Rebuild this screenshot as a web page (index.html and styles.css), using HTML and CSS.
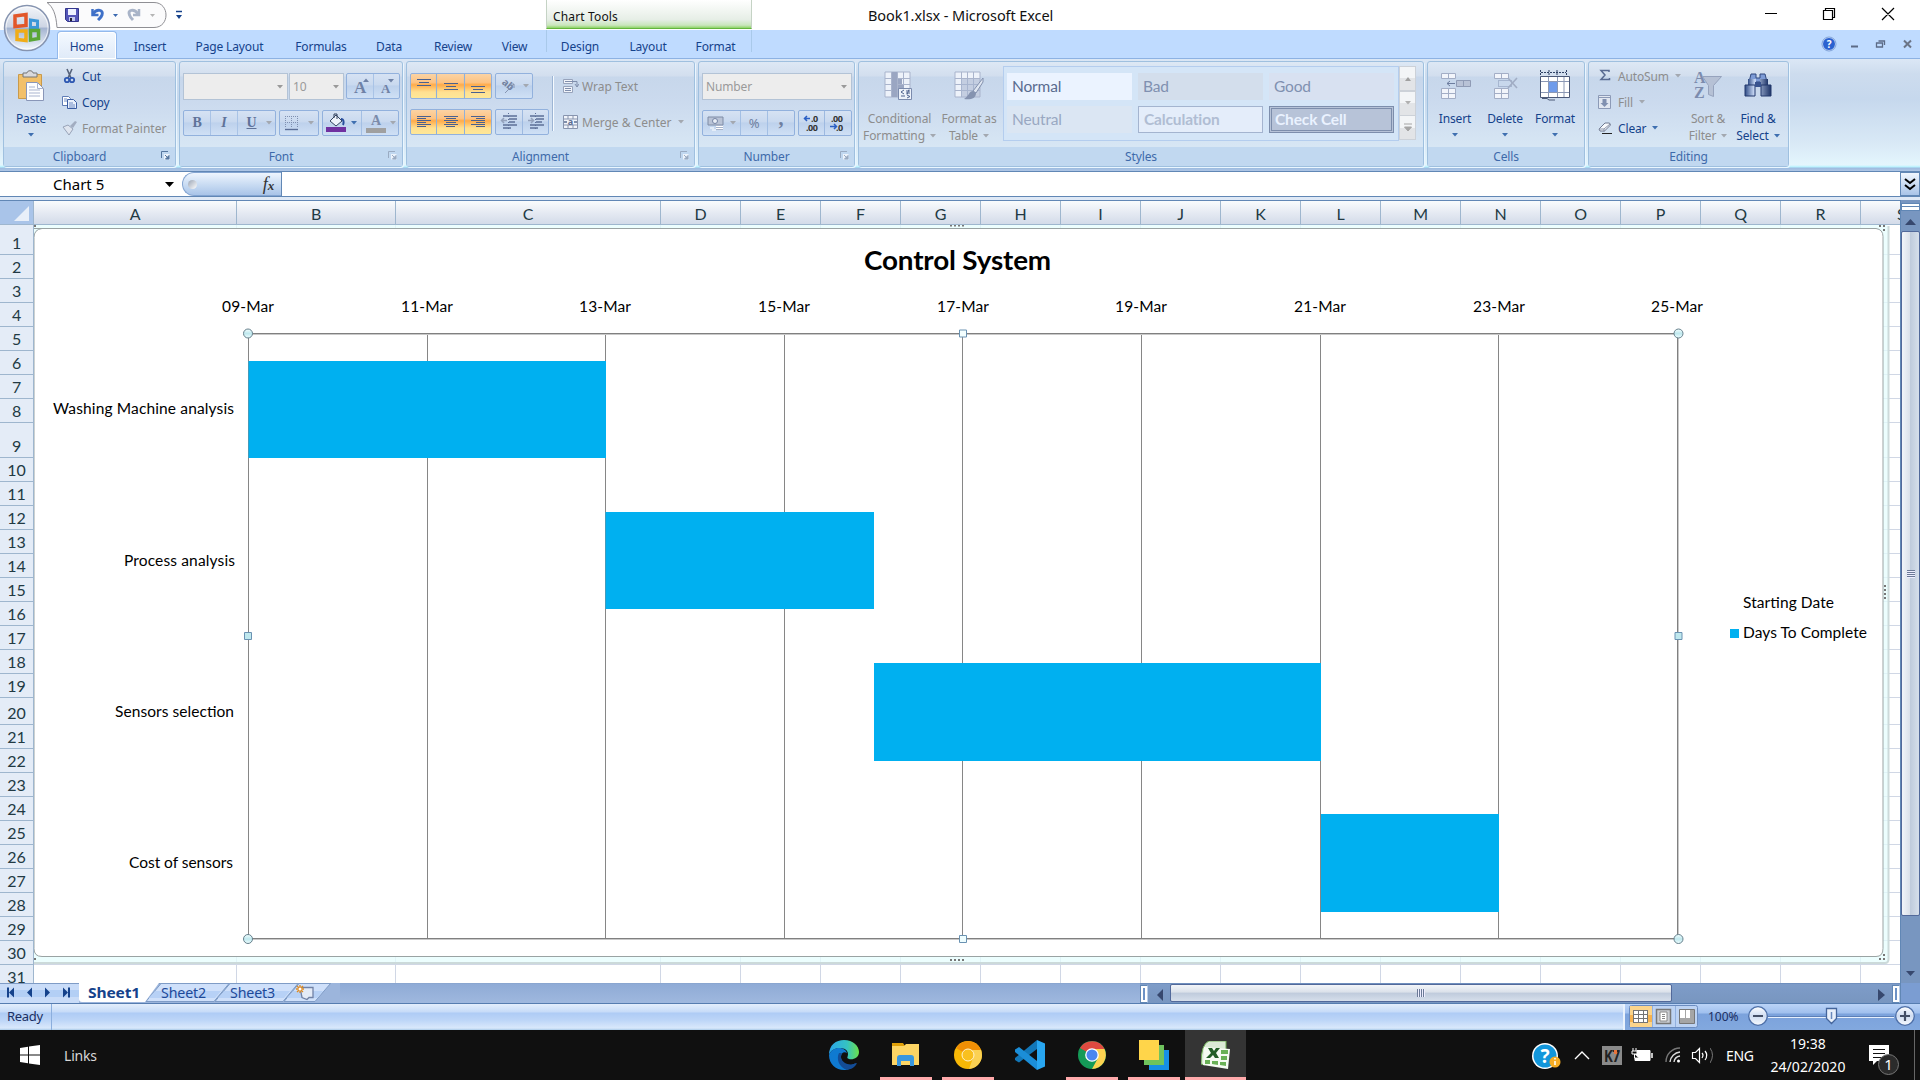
FILE: index.html
```html
<!DOCTYPE html>
<html lang="en">
<head>
<meta charset="utf-8">
<title>Book1.xlsx - Microsoft Excel</title>
<link rel="stylesheet" href="styles.css">
</head>
<body>
<svg width="0" height="0" class="defs">
  <defs>
    <linearGradient id="gOrb" x1="0" y1="0" x2="0" y2="1"><stop offset="0" stop-color="#f4f6fa"/><stop offset=".48" stop-color="#cdd5e4"/><stop offset=".5" stop-color="#a3b3d0"/><stop offset="1" stop-color="#f5faff"/></linearGradient>
    <linearGradient id="gHandle" x1="0" y1="0" x2="0" y2="1"><stop offset="0" stop-color="#f4ffff"/><stop offset=".5" stop-color="#bfe8ee"/><stop offset="1" stop-color="#effeff"/></linearGradient>
    <linearGradient id="gBino" x1="0" y1="0" x2="1" y2="0"><stop offset="0" stop-color="#2f4c86"/><stop offset=".35" stop-color="#c9d9f5"/><stop offset="1" stop-color="#1e3467"/></linearGradient>
    <linearGradient id="gEdge" x1="0" y1="0" x2="1" y2="0"><stop offset="0" stop-color="#2aa5ea"/><stop offset=".6" stop-color="#35c2c2"/><stop offset="1" stop-color="#6be04a"/></linearGradient>
    <linearGradient id="gRound" x1="0" y1="0" x2="0" y2="1"><stop offset="0" stop-color="#fff"/><stop offset=".5" stop-color="#cfdcf1"/><stop offset="1" stop-color="#f6faff"/></linearGradient>
    <symbol id="dd" viewBox="0 0 6 4"><path d="M0 0h6L3 3.5z" fill="currentColor"/></symbol>
    <symbol id="launch" viewBox="0 0 9 9"><path d="M.5 7V.5H7" fill="none" stroke="currentColor"/><path d="M3 3h5.5v5.5H3z" fill="#fff" opacity=".7"/><path d="M4 4l4 4M8 4.500V8H4.500z" stroke="currentColor" fill="currentColor"/></symbol>
    <symbol id="gridIcon" viewBox="0 0 31 30"><path d="M1 1h25v25H1z" fill="#edf2fa"/><path d="M1 1h25v25H1zM7.500 1v25M13.500 1v25M19.500 1v25M1 7.500h25M1 13.500h25M1 19.500h25" fill="none" stroke="#a9b4cc"/></symbol>
  </defs>
</svg>

<header class="titlebar">
  <svg class="orb" width="52" height="52" viewBox="0 0 52 52">
    <circle cx="27" cy="28" r="22.500" fill="url(#gOrb)" stroke="#8694b0" stroke-width="1.500"/>
    <circle cx="27" cy="28" r="21" fill="none" stroke="#fff" opacity=".7"/>
    <path d="M15 16l11-1.500v11l-11 1z" fill="none" stroke="#e2572a" stroke-width="3.500"/>
    <path d="M30.500 20l7 1v6.500h-7z" fill="none" stroke="#3c97d8" stroke-width="3"/>
    <path d="M17 31h9v9.500l-9-1z" fill="none" stroke="#f0ac17" stroke-width="3.500"/>
    <path d="M30.500 30.500h8v8l-8 1.500z" fill="none" stroke="#5aa636" stroke-width="3.500"/>
  </svg>
  <svg class="qat" width="140" height="30" viewBox="47 0 140 30">
    <path d="M47 2.500H154C170 2.500 170 27.500 154 27.500H57C56 14 53 7 47 2.500z" fill="#fbfbfc" stroke="#8f8f94"/>
    <path d="M65.500 8.500h13v13h-11l-2-2z" fill="#5456b8" stroke="#33368c"/><path d="M68 9h8v6h-8z" fill="#eef2ff"/><path d="M69 17h6v4h-6z" fill="#c3c9ee"/><path d="M70 18h2v3h-2z" fill="#223"/>
    <path d="M92.500 9v6h6" fill="none" stroke="#3f70c8" stroke-width="2.500"/><path d="M93 14C97 8 104 10 102 15C101 18 99 19 98 20" fill="none" stroke="#3f70c8" stroke-width="3"/>
    <path d="M113 14h5l-2.500 3z" fill="#3a68b0"/>
    <path d="M139 9v6h-6" fill="none" stroke="#a9b4c8" stroke-width="2.500"/><path d="M138 14C134 8 127 10 129.500 15C130 17 132 19 133 20" fill="none" stroke="#a9b4c8" stroke-width="3"/>
    <path d="M150 14h5l-2.500 3z" fill="#b5b5b5"/>
    <path d="M176 11.500h6" stroke="#15428b" stroke-width="1.500"/><path d="M176 15h6l-3 4z" fill="#15428b"/>
  </svg>
  <div class="context">Chart Tools</div>
  <div class="doctitle">Book1.xlsx - Microsoft Excel</div>
  <svg class="winbtns" width="160" height="30" viewBox="1760 0 160 30" fill="none" stroke="#000" stroke-width="1.200"><path d="M1765 13.500h12M1823.500 10.500h9v9h-9zM1825.500 10.500v-2h9v9h-2M1882 8l12 12M1894 8l-12 12"/></svg>
</header>

<nav class="tabs">
  <span class="tab active">Home</span><span class="tab t2">Insert</span><span class="tab t3">Page Layout</span><span class="tab t4">Formulas</span><span class="tab t5">Data</span><span class="tab t6">Review</span><span class="tab t7">View</span>
  <span class="ctxtabs"><span class="tab c1">Design</span><span class="tab c2">Layout</span><span class="tab c3">Format</span></span>
  <svg class="docbtns" width="100" height="28" viewBox="1820 30 100 28"><circle cx="1829" cy="44" r="6.500" fill="#2b62d0" stroke="#dce8fb"/><circle cx="1829" cy="44" r="7" fill="none" stroke="#5d86c9" stroke-width=".7"/><text x="1829" y="48" text-anchor="middle" class="qm">?</text><path d="M1851 46.500h7" stroke="#5c6b86" stroke-width="2"/><path d="M1876.500 43h6v4h-6zM1878.500 41h6v4" fill="none" stroke="#5c6b86" stroke-width="1.300"/><path d="M1904 40.500l7 7M1911 40.500l-7 7" stroke="#6b7486" stroke-width="2"/></svg>
</nav>

<section class="ribbon">
  <div class="group g-clip">
    <div class="gbody">
      <div class="big paste">
        <svg width="28" height="32" viewBox="0 0 28 32"><path d="M1.500 4.500h23v24h-23z" fill="#f2c069" stroke="#c99a4b"/><path d="M6 3h4c0-3 6-3 6 0h4v4H6z" fill="#d9d9dc" stroke="#777"/><path d="M9.500 12.500h11l6 6v12h-17z" fill="#fdfeff" stroke="#8996b8"/><path d="M20.500 12.500v6h6M12 17h6M12 20h11M12 23h11M12 26h11" fill="none" stroke="#a9b4cf"/></svg>
        <span class="lbl">Paste</span><svg class="dd" width="6" height="4"><use href="#dd"/></svg>
      </div>
      <div class="stack">
        <div class="item"><svg width="16" height="16" viewBox="0 0 16 16"><path d="M5 1l4 9M10 1L6 10" stroke="#56627a" stroke-width="1.600"/><circle cx="5" cy="12" r="2.200" fill="none" stroke="#2e58b2" stroke-width="1.800"/><circle cx="10" cy="12" r="2.200" fill="none" stroke="#2e58b2" stroke-width="1.800"/></svg><span>Cut</span></div>
        <div class="item"><svg width="16" height="16" viewBox="0 0 16 16"><path d="M.5 2.500h6l2 2v7h-8z" fill="#fff" stroke="#5f7cb5"/><path d="M5.500 5.500h6l3 3v6h-9z" fill="#e9f0fc" stroke="#3a5da3"/><path d="M2 5h3M2 7h3M7 9h4M7 11h6M7 13h6" stroke="#6f8cc5"/></svg><span>Copy</span></div>
        <div class="item dis"><svg width="16" height="16" viewBox="0 0 16 16"><path d="M1 7l5-2 5 4-4 6z" fill="#dfe5ef" stroke="#98a3b8"/><path d="M8 6l5-5 2 1-4 6z" fill="#a2adc1"/></svg><span class="fp">Format Painter</span></div>
      </div>
    </div>
    <div class="glabel la">Clipboard<svg class="launch" width="9" height="9"><use href="#launch"/></svg></div>
  </div>

  <div class="group g-font">
    <div class="gbody col">
      <div class="row r1"><div class="combo fontname"><i></i><svg width="6" height="4"><use href="#dd"/></svg></div><div class="combo fontsize"><i>10</i><svg width="6" height="4"><use href="#dd"/></svg></div>
        <div class="btns w53"><svg width="51" height="24" viewBox="0 0 51 24"><text x="6" y="19" class="bigA">A</text><path d="M15 8h6l-3-3.500z" fill="#6f82a6"/><path d="M25.500 0v24" stroke="#a9c3e6"/><text x="33" y="19" class="smallA">A</text><path d="M40 5h6l-3 3.500z" fill="#6f82a6"/></svg></div></div>
      <div class="row r2"><div class="btns w93"><b class="btn serif">B</b><b class="btn serif it">I</b><b class="btn serif un">U</b><svg class="dd g" width="6" height="4"><use href="#dd"/></svg></div>
        <div class="btns w40"><svg width="16" height="16" viewBox="0 0 16 16"><path d="M1.500 1v12M7.500 1v12M13.500 1v12M1 1.500h13M1 7.500h13" stroke="#7f90b0" stroke-dasharray="1 1"/><path d="M1 14.500h13" stroke="#5b6f98" stroke-width="1.400"/></svg><svg class="dd g" width="6" height="4"><use href="#dd"/></svg></div>
        <div class="btns w78"><svg width="22" height="20" viewBox="0 0 22 20"><path d="M5 8l6-6 6 6-6 5z" fill="#eef3fb" stroke="#33435f"/><path d="M9 5V1h3v5" fill="none" stroke="#33435f"/><path d="M16 6c3 0 3 4 2 6" stroke="#284e9d" stroke-width="2" fill="none"/><path d="M1 14h20v5H1z" fill="#7030a0"/></svg><svg class="dd" width="6" height="4"><use href="#dd"/></svg><span class="vsep"></span><b class="fontcolor">A</b><svg class="dd g" width="6" height="4"><use href="#dd"/></svg></div></div>
    </div>
    <div class="glabel la">Font<svg class="launch g" width="9" height="9"><use href="#launch"/></svg></div>
  </div>

  <div class="group g-align">
    <div class="gbody">
      <div class="acol">
        <div class="row"><div class="btns hot"><svg width="81" height="24" viewBox="0 0 81 24" stroke="#4a6190" stroke-width="1.100"><path d="M6 5.500h14M8 8.500h10M6 11.500h14M33 9.500h14M35 12.500h10M33 15.500h14M60 12.500h14M62 15.500h10M60 18.500h14"/><path d="M25.500 0v24M53.500 0v24" stroke="#8fb0da"/></svg></div>
        <div class="btns w37"><svg width="18" height="18" viewBox="0 0 18 18"><text x="2" y="9" transform="rotate(40 6 8)" class="ab">ab</text><path d="M6 16L15 7M11 7h4v4" fill="none" stroke="#8695b1"/></svg><svg class="dd g" width="6" height="4"><use href="#dd"/></svg></div></div>
        <div class="row"><div class="btns hot"><svg width="81" height="24" viewBox="0 0 81 24" stroke="#4a6190"><path d="M6 6.500h14M6 8.500h9M6 10.500h14M6 12.500h9M6 14.500h14M6 16.500h9M33 6.500h14M35 8.500h10M33 10.500h14M35 12.500h10M33 14.500h14M35 16.500h9M60 6.500h14M65 8.500h9M60 10.500h14M65 12.500h9M60 14.500h14M65 16.500h9"/><path d="M25.500 0v24M53.500 0v24" stroke="#8fb0da"/></svg></div>
        <div class="btns w53"><svg width="52" height="24" viewBox="0 0 52 24" fill="none" stroke="#5d7098" stroke-width="1.500"><path d="M7 6h14M13 9h8M13 12h6M7 15h14M7 18h8M34 6h14M40 9h8M40 12h6M34 15h14M34 18h8"/><path d="M12.500 3v17M39.500 3v17" stroke-dasharray="1 2" stroke-width="1"/><path d="M11 10.500H6M8 8l-2.500 2.500L8 13M32 10.500h5M35 8l2.500 2.500L35 13" stroke="#93a1bb"/><path d="M26.500 0v24" stroke="#9db9e0" stroke-width="1"/></svg></div></div>
      </div>
      <div class="rule"></div>
      <div class="wcol dis">
        <div class="item"><svg width="17" height="16" viewBox="0 0 17 16"><path d="M1.500 1.500h9v4h-9zM1.500 8.500h9v6h-9z" fill="#f1f4fa" stroke="#97a3bb"/><path d="M3 3.500h12v5M13 6l2 3 2-3M3 10.500h6M3 12.500h6" fill="none" stroke="#7f8eac"/></svg><span class="wt">Wrap Text</span></div>
        <div class="item"><svg width="17" height="16" viewBox="0 0 17 16"><path d="M1.500 1.500h14v13h-14zM1 5h15M1 11h15M6 1v4M11 1v4M6 11v4M11 11v4" fill="#f1f4fa" stroke="#8794ae"/><path d="M2 8h3M12 8h3" stroke="#5b6d93" stroke-width="1.500"/><text x="5.800" y="10.800" class="ma">a</text></svg><span class="mc">Merge &amp; Center</span><svg class="dd g" width="6" height="4"><use href="#dd"/></svg></div>
      </div>
    </div>
    <div class="glabel la">Alignment<svg class="launch g" width="9" height="9"><use href="#launch"/></svg></div>
  </div>

  <div class="group g-num">
    <div class="gbody col">
      <div class="row r1"><div class="combo numfmt"><i>Number</i><svg width="6" height="4"><use href="#dd"/></svg></div></div>
      <div class="row r2"><div class="btns w93 pct"><svg class="money" width="18" height="17" viewBox="0 0 18 17"><path d="M1 2h15v8H1z" fill="#b9c3d6" stroke="#7f8ca6"/><circle cx="8" cy="6" r="2.500" fill="#e9eef6" stroke="#7585a5"/><path d="M9 10h7v5H9z" fill="#a7b3ca"/><path d="M9 11.500h7M9 13.500h7M3 13h4M5 15h4" stroke="#fff"/></svg><svg class="dd g" width="6" height="4"><use href="#dd"/></svg><span class="vsep"></span><b class="pc">%</b><span class="vsep"></span><b class="pc serif">,</b></div>
      <div class="btns w53"><svg width="52" height="24" viewBox="0 0 52 24"><text x="12" y="11" class="dec">.0</text><text x="7" y="20" class="dec">.00</text><path d="M11 7.500H5M8 5L5.500 7.500 8 10M31 15.500h6M35 13l2.500 2.500L35 18" fill="none" stroke="#2b5fc4" stroke-width="1.500"/><text x="32" y="11" class="dec">.00</text><text x="37" y="20" class="dec">.0</text><path d="M25.500 0v24" stroke="#9db9e0"/></svg></div></div>
    </div>
    <div class="glabel la">Number<svg class="launch g" width="9" height="9"><use href="#launch"/></svg></div>
  </div>

  <div class="group g-styles">
    <div class="gbody">
      <div class="big dis cf"><svg width="31" height="32" viewBox="0 0 31 30"><use href="#gridIcon" width="31" height="30"/><path d="M8 1h5v25H8zM14 8h4v5h-4zM14 14h6v5h-6z" fill="#9aa6c2"/><path d="M14.500 17.500h13v11h-13z" fill="#edf2fa" stroke="#7b8bad"/><path d="M20 19l-3 2 3 2M17 25h4M22 20h4M22 22h4M25 18.500l-2 5M23 24l3 1.500-3 1.500" fill="none" stroke="#4f638e"/></svg>
        <span class="lbl">Conditional</span><span class="lbl l2">Formatting <svg class="dd g" width="6" height="4"><use href="#dd"/></svg></span></div>
      <div class="big dis ft"><svg width="31" height="32" viewBox="0 0 31 30"><use href="#gridIcon" width="31" height="30"/><path d="M7 8h19v18H7z" fill="#a9b6d0" opacity=".6"/><path d="M29 7L19 20l3 2 7-11z" fill="#dfe6f1" stroke="#8391ae"/><path d="M19 20c-4 0-4 5-9 8 6 1 12 0 12-6z" fill="#8593b0"/></svg>
        <span class="lbl">Format as</span><span class="lbl l2">Table <svg class="dd g" width="6" height="4"><use href="#dd"/></svg></span></div>
      <div class="gallery"><span class="st normal">Normal</span><span class="st bad">Bad</span><span class="st good">Good</span><span class="st neutral">Neutral</span><span class="st calc">Calculation</span><span class="st check">Check Cell</span></div>
      <div class="gscroll"><span><svg width="6" height="4" viewBox="0 0 6 4"><path d="M0 4h6L3 0z" fill="#a0a0a0"/></svg></span><span><svg width="6" height="4"><use href="#dd"/></svg></span><span><svg width="8" height="9" viewBox="0 0 8 9"><path d="M0 1h8M.5 4h7L4 8z" stroke="#a5a5a5" fill="#a5a5a5"/></svg></span></div>
    </div>
    <div class="glabel">Styles</div>
  </div>

  <div class="group g-cells">
    <div class="gbody">
      <div class="big"><svg width="31" height="32" viewBox="0 0 31 32"><path d="M1.500 3.500h14v5h-14zM8.500 3.500v5M1.500 18.500h14v10h-14zM1.500 23.500h14M8.500 18.500v10" fill="#f2f5fb" stroke="#a3aec6"/><path d="M16.500 10.500h14v6h-14zM23.500 10.500v6" fill="#b8c2d6" stroke="#8f9bb5"/><path d="M15 13.500H7M10 11l-3 2.500L10 16" fill="none" stroke="#6c7c9e"/></svg><span class="lbl">Insert</span><svg class="dd" width="6" height="4"><use href="#dd"/></svg></div>
      <div class="big"><svg width="31" height="32" viewBox="0 0 31 32"><path d="M4.500 3.500h14v5h-14zM11.500 3.500v5M4.500 18.500h14v10h-14zM4.500 23.500h14M11.500 18.500v10" fill="#f2f5fb" stroke="#a3aec6"/><path d="M8.500 10.500h13v6h-13z" fill="none" stroke="#8595b5" stroke-dasharray="1 1"/><path d="M18 8l9 10M27 8l-9 10" stroke="#a1adc4" stroke-width="1.600"/></svg><span class="lbl">Delete</span><svg class="dd" width="6" height="4"><use href="#dd"/></svg></div>
      <div class="big"><svg width="32" height="32" viewBox="0 0 32 32"><path d="M2 2.500h25M1.500 0v5M27.500 0v5M10 0v5M18 0v5" stroke="#2f4164" stroke-dasharray="2 1"/><path d="M1.500 6.500h29v21h-29z" fill="#fff" stroke="#4a5877"/><path d="M2 11.500h28M2 22.500h28M9.500 7v20M18.500 7v20M25 7v20" stroke="#8b98b5"/><path d="M10 12h8v10h-8z" fill="#6f9bea"/><path d="M3 28.500h5l2 1.500h6" stroke="#4a5877" fill="none"/></svg><span class="lbl">Format</span><svg class="dd" width="6" height="4"><use href="#dd"/></svg></div>
    </div>
    <div class="glabel">Cells</div>
  </div>

  <div class="group g-edit">
    <div class="gbody">
      <div class="stack">
        <div class="item dis"><svg width="14" height="16" viewBox="0 0 14 16"><path d="M11 4V2.500H3L7 7 3 11.500h8.500V10" fill="none" stroke="#596b92" stroke-width="1.500"/></svg><span class="as">AutoSum</span><svg class="dd g" width="6" height="4"><use href="#dd"/></svg></div>
        <div class="item dis"><svg width="14" height="16" viewBox="0 0 14 16"><path d="M.5 1.500h12v13H.5z" fill="#e1e7f1" stroke="#8c9ab7"/><path d="M.5 3.500h12" stroke="#8c9ab7"/><path d="M4.500 5h4v4h2l-4 4-4-4h2z" fill="#8090b0"/></svg><span>Fill</span><svg class="dd g" width="6" height="4"><use href="#dd"/></svg></div>
        <div class="item"><svg width="14" height="16" viewBox="0 0 14 16"><path d="M1 9l6-6h4.500l1 2-6 6H2z" fill="#f8fafd" stroke="#6e7890"/><path d="M1 9h5l6-5M6 9v3" fill="none" stroke="#8a93a8"/><path d="M4 13.500h10" stroke="#222"/></svg><span class="cl">Clear</span><svg class="dd" width="6" height="4"><use href="#dd"/></svg></div>
      </div>
      <div class="big dis so"><svg width="30" height="32" viewBox="0 0 30 32"><text x="1" y="13" class="az">A</text><text x="1" y="28" class="az">Z</text><path d="M9.500 6.500h19l-8 9v11l-5-2v-9z" fill="#b6c1d5" stroke="#96a3bd"/></svg><span class="lbl">Sort &amp;</span><span class="lbl l2">Filter <svg class="dd g" width="6" height="4"><use href="#dd"/></svg></span></div>
      <div class="big fi"><svg width="28" height="32" viewBox="0 0 28 32"><path d="M7 4h5v4h4V4h5l2 8H5z" fill="#7d9bd6" stroke="#31497e"/><path d="M4 9h8v7H4zM16 9h8v7h-8z" fill="url(#gBino)"/><path d="M1 15h10v11H1zM17 15h10v11H17z" fill="url(#gBino)" stroke="#22386c"/><path d="M11 12h6v5h-6z" fill="#39538f"/></svg><span class="lbl">Find &amp;</span><span class="lbl l2">Select <svg class="dd" width="6" height="4"><use href="#dd"/></svg></span></div>
    </div>
    <div class="glabel">Editing</div>
  </div>
</section>

<div class="formulabar">
  <div class="namebox"><span>Chart 5</span><svg width="9" height="5" viewBox="0 0 9 5"><path d="M0 0h9L4.500 5z"/></svg></div>
  <div class="fxwrap"><div class="fxbox"><i class="knob"></i><span class="fx">f<small>x</small></span></div></div>
  <div class="finput"></div>
  <div class="fexpand"><svg width="12" height="13" viewBox="0 0 12 13" fill="none" stroke="#000" stroke-width="2"><path d="M1 1l5 4 5-4M1 7l5 4 5-4"/></svg></div>
</div>

<main class="book">
  <div class="sheet">
    <div class="cols"><span class="corner"><svg width="33" height="23"><path d="M29 5v15H14z" fill="#e8eff9"/></svg></span><span>A</span><span>B</span><span>C</span><span>D</span><span>E</span><span>F</span><span>G</span><span>H</span><span>I</span><span>J</span><span>K</span><span>L</span><span>M</span><span>N</span><span>O</span><span>P</span><span>Q</span><span>R</span><span class="last">S</span></div>
    <div class="area">
      <div class="rows"><span>1</span><span>2</span><span>3</span><span>4</span><span>5</span><span>6</span><span>7</span><span>8</span><span>9</span><span>10</span><span>11</span><span>12</span><span>13</span><span>14</span><span>15</span><span>16</span><span>17</span><span>18</span><span>19</span><span>20</span><span>21</span><span>22</span><span>23</span><span>24</span><span>25</span><span>26</span><span>27</span><span>28</span><span>29</span><span>30</span><span class="cut">31</span></div>
      <svg class="canvas" width="1866" height="758" viewBox="34 225 1866 758">
        <path d="M34 225h1866v758H34z" fill="#fff"/>
        <g stroke="#d0d7e5"><path d="M236.500 225v758M395.500 225v758M660.500 225v758M740.500 225v758M820.500 225v758M900.500 225v758M980.500 225v758M1060.500 225v758M1140.500 225v758M1220.500 225v758M1300.500 225v758M1380.500 225v758M1460.500 225v758M1540.500 225v758M1620.500 225v758M1700.500 225v758M1780.500 225v758M1860.500 225v758"/>
        <path d="M1880 254.500h20M1880 278.500h20M1880 302.500h20M1880 326.500h20M1880 350.500h20M1880 374.500h20M1880 398.500h20M1880 422.500h20M1880 457.500h20M1880 481.500h20M1880 505.500h20M1880 529.500h20M1880 553.500h20M1880 577.500h20M1880 601.500h20M1880 625.500h20M1880 649.500h20M1880 673.500h20M1880 697.500h20M1880 724.500h20M1880 748.500h20M1880 772.500h20M1880 796.500h20M1880 820.500h20M1880 844.500h20M1880 868.500h20M1880 892.500h20M1880 916.500h20M1880 940.500h20M34 964.500h1866"/></g>
        <path d="M34 225h1851q4 0 4 4v730q0 4-4 4H34z" fill="#e6fdfd" opacity=".75"/>
        <path d="M34 963h1851q3.500 0 3.500-4V226" fill="none" stroke="#ccdada" stroke-width="2"/>
        <path d="M34 228.500h1842q7 1 7 8v712q0 8-7 8H42q-8 0-8-8v-711q0-8 8-9z" fill="#fff" stroke="#9aa3a3"/>
        <g fill="#777"><path d="M34 225h2v2h-2zM34 958h2v2h-2zM1879 225h2v2h-2zM1883 225h2v2h-2zM1883 229h2v2h-2zM1879 958h2v2h-2zM1883 954h2v2h-2zM1883 958h2v2h-2z"/></g>
        <path d="M950 225.500h15M950 960h15M1885 585v16" stroke="#777" stroke-width="2" stroke-dasharray="2 2"/>
        <g stroke="#868686"><path d="M248.500 333v606M427.500 333v606M605.500 333v606M784.500 333v606M962.500 333v606M1141.500 333v606M1320.500 333v606M1498.500 333v606"/></g>
        <path d="M248 334.500h1430M1678.500 333v606M248 939.500h1430" stroke="#c9c9c9"/>
        <path d="M248 333.500h1429.500v605H248" fill="none" stroke="#808080"/>
        <g fill="#00b0f0"><path d="M248.500 361h357.500v97h-357.500zM605.500 512h268.500v97h-268.500zM874 663h447v98h-447zM1321 814h178v98h-178z"/></g>
        <g fill="url(#gHandle)" stroke="#66808c"><circle cx="248" cy="333.500" r="4.500"/><circle cx="1678.500" cy="333.500" r="4.500"/><circle cx="248" cy="939" r="4.500"/><circle cx="1678.500" cy="939" r="4.500"/></g>
        <g fill="url(#gHandle)" stroke="#6a92b2"><path d="M959.500 330h7v7h-7zM959.500 935.500h7v7h-7zM244.500 632.500h7v7h-7zM1675 632.500h7v7h-7z"/></g>
        <text class="ctitle" x="864" y="270" textLength="187" lengthAdjust="spacingAndGlyphs">Control System</text>
        <g class="ctext">
          <text x="222" y="312" textLength="52">09-Mar</text><text x="401" y="312" textLength="52">11-Mar</text><text x="579" y="312" textLength="52">13-Mar</text><text x="758" y="312" textLength="52">15-Mar</text><text x="937" y="312" textLength="52">17-Mar</text><text x="1115" y="312" textLength="52">19-Mar</text><text x="1294" y="312" textLength="52">21-Mar</text><text x="1473" y="312" textLength="52">23-Mar</text><text x="1651" y="312" textLength="52">25-Mar</text>
          <text x="53" y="414" textLength="181">Washing Machine analysis</text><text x="124" y="566" textLength="111">Process analysis</text><text x="115" y="717" textLength="119">Sensors selection</text><text x="129" y="868" textLength="104">Cost of sensors</text>
          <text x="1743" y="608" textLength="91">Starting Date</text><text x="1743" y="638" textLength="124">Days To Complete</text>
        </g>
        <path d="M1730 629h9v9h-9z" fill="#00b0f0"/>
      </svg>
    </div>
    <div class="sheetbar">
      <svg width="340" height="20" viewBox="0 983 340 20">
        <path d="M0 983h79v20H0z" fill="#c9dcf8"/><path d="M0 990h79v7H0z" fill="#b3cff5"/>
        <path d="M0 983.500h331" stroke="#7f9cc6"/>
        <g fill="#15428b"><path d="M7 987.500h2v10H7zM14 987.500v10l-5-5zM32 987.500v10l-5-5zM45 987.500v10l5-5zM63 987.500v10l5-5zM68 987.500h2v10h-2z"/></g>
        <g fill="#cfe0fa" stroke="#7f9cc6"><path d="M284 1001.500L299 983.500H330.500L315 1001.500z"/><path d="M215 1001.500L230 983.500H298L283 1001.500z"/><path d="M146 1001.500L161 983.500H229L214 1001.500z"/></g>
        <path d="M155 991h66l-6 7h-66zM224 991h66l-6 7h-66zM293 991h30l-6 7h-30z" fill="#b7d1f6"/>
        <path d="M79 983h80L145 1002H82q-3 0-3-3z" fill="#fff"/>
        <text class="sheet1" x="88" y="998" textLength="52" lengthAdjust="spacingAndGlyphs">Sheet1</text><text class="shn" x="161" y="998" textLength="45" lengthAdjust="spacingAndGlyphs">Sheet2</text><text class="shn" x="230" y="998" textLength="45" lengthAdjust="spacingAndGlyphs">Sheet3</text>
        <path d="M300 987.500h13v10h-4l-2 2-5-2z" fill="#e4ebf7" stroke="#7182a6" stroke-width="1.300"/><path d="M300 985v8M296 989h8M297 986l6 6M303 986l-6 6" stroke="#e08a1e" stroke-width="1.300"/><circle cx="300" cy="989" r="1.500" fill="#fff"/>
      </svg>
      <div class="fill"></div>
      <div class="hscroll"><i class="split"></i><svg width="23" height="20"><path d="M15 5v12L9 11z" fill="#37486e"/></svg><div class="hthumb"><i></i></div><svg class="ra" width="14" height="20"><path d="M2 5v12l7-6z" fill="#37486e"/></svg><i class="split"></i></div>
    </div>
  </div>
  <div class="vscroll"><i class="vsplit"></i><svg width="18" height="20"><path d="M4 14h11l-5.500-6z" fill="#37486e"/></svg><div class="vthumb"><i></i></div><div class="vspace"></div><svg width="18" height="17"><path d="M5 5h9l-4.500 5z" fill="#37486e"/></svg><div class="vcorner"></div></div>
</main>

<footer class="status">
  <span class="ready">Ready</span>
  <div class="sright">
    <svg class="views" width="70" height="24" viewBox="0 0 70 24"><rect x=".5" y=".5" width="68" height="22" rx="2" fill="#bdd3f3" stroke="#6b8cc0"/><path d="M1 1h22v21H1z" fill="#fbd48b"/><path d="M1 10h22v7H1z" fill="#f6b24e"/><path d="M4 5h15v13H4z" fill="#747474"/><path d="M5 6h4v3H5zM10 6h4v3h-4zM15 6h3v3h-3zM5 10h4v3H5zM10 10h4v3h-4zM15 10h3v3h-3zM5 14h4v3H5zM10 14h4v3h-4zM15 14h3v3h-3z" fill="#fff"/><path d="M27.500 4.500h14v14h-14z" fill="#c9ccd2" stroke="#777" stroke-width="1.500"/><path d="M31 7h7v9h-7z" fill="#fff" stroke="#888"/><path d="M33 9.500h3M33 11.500h3M33 13.500h3" stroke="#888"/><path d="M50.500 4.500h15v14h-15z" fill="#a5a5a5" stroke="#777"/><path d="M51 5h5v8h-5zM57 5h4v8h-4z" fill="#fff"/><path d="M23.500 1v21M46.500 1v21" stroke="#92b0de"/></svg>
    <span class="pcnt">100%</span>
    <svg width="170" height="26" viewBox="1745 1004 170 26"><path d="M1768 1016.500h126" stroke="#5b7fb8"/><path d="M1768 1017.500h126" stroke="#e6f0fd"/><g fill="url(#gRound)" stroke="#4d6fa8" stroke-width="1.300"><circle cx="1758" cy="1016" r="9.300"/><circle cx="1905" cy="1016" r="9.300"/></g><path d="M1753 1016h10M1900 1016h10M1905 1011v10" stroke="#444f66" stroke-width="2.200"/><path d="M1826.500 1008.500h10v10l-5 5-5-5z" fill="#e7effb" stroke="#44659c" stroke-width="1.300"/><path d="M1831.500 1012v7" stroke="#6889bd" stroke-width="1.500"/></svg>
  </div>
</footer>

<footer class="taskbar">
  <div class="start"><svg width="20" height="20" viewBox="0 0 20 20" fill="#fff"><path d="M0 3l8-1.200V9.500H0zM9 1.600L20 0v9.500H9zM0 10.500h8v7.700L0 17zM9 10.500h11V20L9 18.400z"/></svg><span>Links</span></div>
  <div class="apps">
    <span><svg width="30" height="30" viewBox="0 0 30 30"><path d="M0 15C0 5 7 0 15 0c9 0 15 6 15 12 0 6-6 8-10 7-3-1-1-2-1-5 0-4-4-6-8-6C6 8 2 10 0 15z" fill="url(#gEdge)"/><path d="M0 15c2-5 6-7 10-7 4 0 7 2 8 5-3-2-6 0-6 4 0 5 5 9 11 8l4-2c-3 5-7 7-12 7C7 30 0 24 0 15z" fill="#0f7ad1"/><path d="M10 13c-3 6 0 14 8 17 5-1 8-3 10-7-7 3-14 1-16-5 0-2 0-4 1-5z" fill="#134c96"/></svg></span>
    <span class="run"><svg width="28" height="30" viewBox="0 0 28 30"><path d="M0 3h11l2 3H0z" fill="#e0a008"/><path d="M0 6h12l2-2h13v21H0z" fill="#fdd564"/><path d="M5 26V18q0-3 3-3h11q3 0 3 3v8h-4v-5h-9v5z" fill="#3a97de"/></svg></span>
    <span class="run"><svg width="28" height="28" viewBox="0 0 28 28"><circle cx="14" cy="14" r="14" fill="#f8b806"/><path d="M14 14L2 7A14 14 0 0 1 27 9H14z" fill="#f08f05"/><path d="M18 9h9a14 14 0 0 1-12 19l4-11z" fill="#fbd153"/><circle cx="14" cy="14" r="6" fill="#f9c01f" stroke="#fff3d0"/></svg></span>
    <span><svg width="30" height="30" viewBox="0 0 30 30"><path d="M22 0l8 3.500v23L22 30z" fill="#28a6f0"/><path d="M22 0v9L4 22.500 0 20v-2z" fill="#1277b8"/><path d="M22 30v-9L4 7 0 9.500V12z" fill="#1b8ed8"/></svg></span>
    <span class="run"><svg width="28" height="28" viewBox="0 0 28 28"><circle cx="14" cy="14" r="14" fill="#159a57"/><path d="M14 14L2 7A14 14 0 0 1 26.500 8H14z" fill="#de4a40"/><path d="M16 8h10.500A14 14 0 0 1 14 28l6-11z" fill="#fdd250"/><circle cx="14" cy="14" r="6.200" fill="#4a86ef" stroke="#fff" stroke-width="1.300"/></svg></span>
    <span class="run"><svg width="30" height="30" viewBox="0 0 30 30"><path d="M10 10h20v20H10z" fill="#168fe6"/><path d="M5 5h20v20H5z" fill="#6fc35d"/><path d="M0 0h20v20H0z" fill="#ffd54a"/></svg></span>
    <span class="run on"><svg width="30" height="28" viewBox="0 0 30 28"><path d="M0 23Q0 3 8 0h17v12H4v12z" fill="#dbead6" stroke="#6fae55"/><path d="M3 6l26 2-2 20-25-4z" fill="#f5fbf2"/><path d="M20 9h7v4h-7zM20 15h6v4h-6zM19 21h6v4l-6-1zM11 20h6v4l-6-1zM4 19h5v4H4z" fill="#69b156"/><path d="M7 7h4l2 3 2-3h4l-4 5 3 5h-4l-2-3-3 3H5l5-5z" fill="#225e26"/></svg></span>
  </div>
  <div class="tray">
    <svg width="180" height="50" viewBox="1530 1030 180 50">
      <circle cx="1545" cy="1056" r="13" fill="#fff"/><circle cx="1545" cy="1056" r="11.500" fill="#1296db"/><text x="1545" y="1063" text-anchor="middle" class="hq">?</text><circle cx="1555" cy="1062" r="5.500" fill="#f6ac23"/><path d="M1555 1061v4M1555 1058v1.500" stroke="#fff" stroke-width="1.500"/>
      <path d="M1575 1059l7-7 7 7" fill="none" stroke="#fff" stroke-width="1.400"/>
      <rect x="1602" y="1046" width="20" height="19" fill="#8a8a8a"/><text x="1604" y="1062" class="k7" textLength="16" lengthAdjust="spacingAndGlyphs">K7</text><path d="M1614 1050h3v4h-3z" fill="#e9743b"/>
      <path d="M1637 1050.500h13v10h-15v-6" fill="#fff" stroke="#fff"/><path d="M1652 1053v5" stroke="#fff" stroke-width="1.500"/><path d="M1633 1048v3M1636 1048v3M1632 1051h5v3h-5zM1634.500 1054v4h4" fill="#111" stroke="#fff"/>
      <path d="M1666 1062a14 14 0 0 1 14-14" fill="none" stroke="#777" stroke-width="1.400"/><path d="M1670 1062a11 11 0 0 1 10-10M1674 1062a7 7 0 0 1 6-6" fill="none" stroke="#ddd" stroke-width="1.400"/><circle cx="1678.500" cy="1061" r="1.500" fill="#fff"/>
      <path d="M1692.500 1052.500h3l4-4v14l-4-4h-3z" fill="none" stroke="#fff" stroke-width="1.200"/><path d="M1702 1053q2 2 0 5M1705 1051q3.500 4 0 9" fill="none" stroke="#fff" stroke-width="1.200"/>
    </svg>
    <svg class="outer" width="6" height="50"><path d="M0 18q5 7 0 15" fill="none" stroke="#777"/></svg>
    <span class="eng">ENG</span>
    <span class="clock"><span>19:38</span><span>24/02/2020</span></span>
    <svg width="74" height="50" viewBox="1846 1030 74 50"><path d="M1869 1045h20v16h-12l-4 4v-4h-4z" fill="#fff"/><path d="M1873 1049.500h12M1873 1053.500h12M1873 1057.500h9" stroke="#111"/><circle cx="1888.500" cy="1064.500" r="10" fill="#2b2b2b" stroke="#777"/><text x="1888.500" y="1070" text-anchor="middle" class="nb">1</text><path d="M1914.500 1030v50" stroke="#666"/></svg>
  </div>
</footer>
</body>
</html>
```
FILE: styles.css
```css
* { box-sizing: border-box; }
body { margin: 0; width: 1920px; height: 1080px; overflow: hidden; display: flex; flex-direction: column; font: 12px "Noto Sans", "Open Sans", sans-serif; letter-spacing: -.15px; color: #15428b; background: #fff; font-variant-ligatures: none; }
svg { display: block; flex: none; }
.defs { position: absolute; }
i { font-style: normal; }

.titlebar { height: 30px; flex: none; display: flex; background: #fff; position: relative; z-index: 2; }
.orb { margin-right: -5px; }
.qat { flex: none; }
.context { margin-left: 359px; width: 206px; height: 29px; padding: 9px 6px; line-height: 16px; letter-spacing: .15px; color: #111; border: solid #c5d3c5; border-width: 0 1px; border-bottom: 1px solid #62b53c; background: linear-gradient(#fff 0, #e6eee6 70%, #c9e6bb 90%, #8ed465 100%); }
.doctitle { margin-left: 116px; font-size: 14.500px; letter-spacing: -.08px; line-height: 31px; color: #111; white-space: nowrap; flex: 1; }
.winbtns { margin-left: auto; }

.tabs { height: 29px; flex: none; display: flex; background: #bfdbff; padding-left: 57px; line-height: 33px; border-bottom: 1px solid #8db2e3; position: relative; z-index: 1; }
.tab { text-align: center; white-space: nowrap; }
.tab.active { width: 60px; margin: 1px 0 -1px; line-height: 29px; border: 1px solid #93b9ec; border-bottom: 0; border-radius: 4px 4px 0 0; background: linear-gradient(#f4f9ff, #dfeaf8); box-shadow: inset 0 0 0 1px #fff; padding-right: 1px; }
.t2 { width: 66px; } .t3 { width: 93px; } .t4 { width: 90px; } .t5 { width: 46px; } .t6 { width: 82px; } .t7 { width: 41px; margin-right: 11px; }
.ctxtabs { display: flex; border: solid #a9c9ea; border-width: 0 1px; width: 206px; height: 22px; }
.c1 { width: 66px; } .c2 { width: 70px; } .c3 { width: 65px; }
.docbtns { margin-left: auto; }
.qm { font: bold 10px "Noto Sans", sans-serif; fill: #fff; }

.ribbon { height: 113px; flex: none; display: flex; gap: 3px; padding: 2px 0 5px 3px; background: linear-gradient(#dbe7f5 0, #cddcee 15px, #c6d8ed 40px, #d9e9f6 85px, #e4f6fd 106px, #b5f3ff 108px, #9dbbdf 109px, #afc6e6 112px); border-bottom: 1px solid #6187b5; }
.group { height: 106px; flex: none; border: 1px solid #9fc0df; border-radius: 3px; display: flex; flex-direction: column; box-shadow: 1px 1px 0 #eaf6ff; background: linear-gradient(#dde8f5 0, #d2deee 14px, #c7d7eb 15px, #cbdaee 40px, #d7e6f4 84px); }
.gbody { height: 85px; display: flex; flex: none; }
.gbody.col { flex-direction: column; }
.glabel { height: 19px; line-height: 20px; text-align: center; background: #c1d8f0; color: #3e6aaa; position: relative; }
.glabel.la { padding-right: 20px; }
.launch { position: absolute; right: 5px; top: 4px; color: #56779f; }
.launch.g { color: #9aabc2; }
.g-clip { width: 173px; } .g-font { width: 224px; } .g-align { width: 289px; } .g-num { width: 157px; } .g-styles { width: 566px; } .g-cells { width: 158px; } .g-edit { width: 201px; }
.big { display: flex; flex-direction: column; align-items: center; padding-top: 8px; width: 50px; white-space: nowrap; }
.big .lbl { line-height: 17px; margin-top: 8px; }
.big .lbl.l2 { margin-top: 0; display: flex; align-items: center; gap: 5px; }
.big > .dd { margin-top: 6px; }
.dd { color: #3f6fb0; }
.dis { color: #8d8d8d; }
.dd.g { color: #a3a8b0; }
.paste { width: 54px; }
.stack { display: flex; flex-direction: column; padding: 1px 0 0 4px; }
.item { height: 26px; display: flex; align-items: center; gap: 4px; white-space: nowrap; }
.fp { letter-spacing: 0; }
.row { display: flex; gap: 3px; }
.col .r1 { padding: 11px 0 0 3px; gap: 1px; }
.col .r2 { padding: 10px 0 0 3px; }
.combo { height: 27px; background: #ededed; border: 1px solid #b3c3d6; display: flex; align-items: center; justify-content: space-between; padding: 0 4px 0 3px; color: #9a9a9a; }
.fontname { width: 105px; } .fontsize { width: 55px; } .numfmt { width: 150px; }
.combo + .btns { margin-left: 1px; }
.btns { height: 26px; border: 1px solid #92b1dd; border-radius: 2px; background: linear-gradient(#d6e2f3 0, #c9d9ef 45%, #bdd1ec 50%, #cfe0f5 100%); display: flex; align-items: center; justify-content: space-around; }
.w53 { width: 54px; } .w93 { width: 93px; justify-content: flex-start; } .w40 { width: 40px; } .w78 { width: 77px; } .w37 { width: 38px; }
.btn { flex: 0 0 27px; text-align: center; line-height: 24px; color: #5f7299; border-right: 1px solid #a9c3e6; }
.un { border: 0; width: 26px; }
.w93 .dd { margin-left: 1px; }
.serif { font-family: "Liberation Serif", serif; font-size: 14px; }
.it { font-style: italic; } .un { text-decoration: underline; }
.bigA { font: bold 17px "Liberation Serif", serif; fill: #6f82a6; } .smallA { font: bold 13px "Liberation Serif", serif; fill: #6f82a6; }
.vsep { width: 1px; height: 24px; background: #a3bfe4; }
.fontcolor { font: bold 14px/15px "Liberation Serif", serif; width: 20px; height: 20px; text-align: center; color: #7b8baa; border-bottom: 5px solid #a0a0a0; }
.hot { width: 82px; background: linear-gradient(#fbd3a4 0, #fdc383 35%, #ffab4a 45%, #ffe092 75%, #fee797 100%); }
.acol { padding: 11px 0 0 3px; display: flex; flex-direction: column; gap: 10px; }
.rule { width: 2px; height: 55px; margin: 14px 8px 0 3px; background: linear-gradient(90deg, #9db5d4 50%, #f5faff 50%); }
.wcol { padding-top: 11px; display: flex; flex-direction: column; gap: 10px; }
.wcol .item { gap: 3px; letter-spacing: 0; } .wcol .dd { margin-left: 3px; }
.ab { font: bold 10px "Noto Sans", sans-serif; fill: #72829f; } .ma { font: bold 9px "Noto Sans", sans-serif; fill: #5b6d93; }
.money { margin: 0 4px 0 4px; }
.pct .vsep { margin-left: 4px; } .pct .pc + .vsep { margin-left: 0; }
.pc { width: 27px; text-align: center; color: #6e7f9f; font-size: 13px; font-weight: normal; } .pc.serif { font: bold 20px/8px "Liberation Serif", serif; margin-top: -10px; }
.dec { font: bold 9px "Noto Sans", sans-serif; fill: #333; letter-spacing: -.5px; }
.cf { width: 81px; margin-right: -1px; letter-spacing: -.1px; } .ft { width: 60px; }
.gallery { width: 396px; height: 75px; margin: 4px 0 0 4px; padding: 6px 3px; border: 1px solid #b4cdee; background: #d4e5f7; display: grid; grid-template-columns: repeat(3, 125px); grid-template-rows: 27px 27px; gap: 6px; font: 15.500px/27px Lato, sans-serif; }
.st { padding-left: 5px; } .normal { background: #ebf3ff; color: #596b8f; } .bad { background: #d3deec; color: #8090b0; } .good { background: #d8e1f1; color: #8090b0; } .neutral { background: #dbe6f3; color: #99a8c2; }
.calc { background: #e4edfa; border: 1px solid #a4b4cf; color: #b0bdd3; font-weight: bold; line-height: 25px; }
.check { background: #b7c3d8; border: 3px double #7d8eac; color: #eaf2ff; font-weight: bold; line-height: 21px; padding-left: 3px; }
.gscroll { margin-top: 4px; width: 17px; display: flex; flex-direction: column; color: #b0b0b0; }
.gscroll span { height: 25px; margin-bottom: -.5px; border: 1px solid #ccd1d8; background: linear-gradient(#f3f5f7 50%, #e2e4e7 50%); display: flex; align-items: center; justify-content: center; }
.g-cells .gbody { padding-left: 2px; }
.g-edit .stack { width: 94px; padding-left: 9px; } .g-edit .item { gap: 6px; }
.az { font: bold 16px "Liberation Serif", serif; fill: #7c8cae; }

.formulabar { height: 25px; flex: none; display: flex; background: #fff; border-bottom: 1px solid #6187b5; }
.namebox { width: 182px; padding: 0 8px 0 53px; display: flex; align-items: center; justify-content: space-between; font-size: 15px; letter-spacing: 0; color: #000; }
.fxwrap { width: 100px; border-right: 1px solid #6187b5; }
.fxbox { height: 24px; border: 1px solid #84a5d2; border-right: 0; border-radius: 12px 0 0 12px; background: linear-gradient(#eef5fe, #c4d8f1 60%, #a9c4e8); display: flex; align-items: center; justify-content: space-between; padding: 0 7px 0 5px; }
.knob { width: 9px; height: 9px; border-radius: 50%; background: linear-gradient(135deg, #9ba5b5, #fff); }
.fx { font: italic 18px "Liberation Serif", serif; color: #333; } .fx small { font-size: 13px; font-weight: bold; }
.finput { flex: 1; } .fexpand { width: 20px; border: 1px solid #6187b5; background: linear-gradient(#f0f6fe, #a9c4e8); display: flex; align-items: center; justify-content: center; }

.book { height: 806px; flex: none; display: flex; background: #dfe9f6; padding-top: 3px; }
.sheet { width: 1900px; flex: none; border-top: 1px solid #6187b5; overflow: hidden; }
.cols { height: 24px; display: grid; grid-template-columns: 34px 203px 159px 265px repeat(15, 80px) 39px; background: linear-gradient(#f9fcfd, #e4e9f2 55%, #d3dbe9); border-bottom: 1px solid #9eb6ce; font: 16px/25px Lato, sans-serif; color: #223a44; text-align: center; }
.cols span { border-right: 1px solid #9eb6ce; overflow: hidden; }
.cols .last { padding-left: 0; text-align: left; text-indent: 36px; border: 0; }
.corner { background: #a9c4e9; }
.area { display: flex; height: 758px; }
.rows { width: 34px; flex: none; display: grid; grid-template-rows: 30px repeat(7, 24px) 35px repeat(10, 24px) 27px repeat(10, 24px) 18px; background: #e4ecf7; border-right: 1px solid #9eb6ce; font: 16px/23px Lato, sans-serif; color: #223a44; text-align: center; overflow: hidden; }
.rows span { border-bottom: 1px solid #9eb6ce; display: flex; align-items: flex-end; justify-content: center; line-height: 22px; }
.rows .cut { border: 0; align-items: flex-start; line-height: 24px; }
.ctext { font: 15.500px Lato, sans-serif; letter-spacing: 0; fill: #000; } .ctitle { font: bold 27px Lato, sans-serif; fill: #000; }
.sheetbar { height: 20px; display: flex; background: #9cb5dc; }
.sheet1 { font: bold 15px "Noto Sans", sans-serif; fill: #15428b; } .shn { font: 14px "Noto Sans", sans-serif; fill: #1d4999; }
.fill { width: 800px; border-top: 1px solid #8aa6d0; background: linear-gradient(#8fabd6, #9fb8de); }
.hscroll { flex: 1; display: flex; background: linear-gradient(#7e9cc8, #7896c0); border-top: 1px solid #6f8fbe; }
.split { width: 8px; height: 18px; margin-top: 1px; background: #fff; border: 1px solid #6187b5; border-right-color: #b7cdea; box-shadow: inset 0 0 0 2px #fff, inset 4px 0 0 #6d92c6; }
.hthumb { width: 502px; height: 18px; margin-left: -1px; border: 1px solid #52699a; border-radius: 2px; background: linear-gradient(#f2f5f9, #dbe1ea 45%, #bfcbdc 50%, #d6dfeb); display: flex; align-items: center; justify-content: center; }
.hthumb i { width: 8px; height: 8px; background: repeating-linear-gradient(90deg, #6b7a96 0 1px, #eef 1px 2px); }
.ra { margin-left: 204px; } .ra + .split { margin-left: 2px; }
.vscroll { width: 20px; border-left: 1px solid #6187b5; background: #7896c0; display: flex; flex-direction: column; }
.vsplit { height: 8px; margin: 3px 0 0; background: #fff; border: 1px solid #6187b5; box-shadow: inset 0 2px #fff, inset 0 3px #6187b5; }
.vthumb { height: 685px; border: 1px solid #52699a; border-radius: 2px; background: linear-gradient(90deg, #f2f5f9, #dbe1ea 45%, #bfcbdc 50%, #d6dfeb); display: flex; align-items: center; justify-content: center; }
.vthumb i { width: 8px; height: 8px; background: repeating-linear-gradient(#6b7a96 0 1px, #eef 1px 2px); }
.vspace { flex: 1; } .vcorner { height: 20px; background: #7b9dd2; }

.status { height: 27px; flex: none; display: flex; border-top: 1px solid #567db0; background: linear-gradient(#e3eefc 0, #c6dbf8 8px, #aecbf5 9px, #bcd5f7 16px, #d9e8fb 24px, #aacbe8 26px); line-height: 25px; }
.ready { width: 52px; padding-left: 7px; border-right: 1px solid #8baedd; font-size: 13px; letter-spacing: -.3px; color: #1b2f63; }
.sright { margin-left: auto; width: 297px; padding-left: 4px; border-left: 2px solid #e9f2fd; background: linear-gradient(#bad3f7, #a0c0ee 9px, #7ba2dc 10px, #82a8de 25px); display: flex; }
.views { margin-top: 1px; } .pcnt { width: 46px; padding-left: 9px; color: #1b2f63; letter-spacing: 0; }

.taskbar { height: 50px; flex: none; background: #101010; display: flex; color: #fff; font-size: 14px; }
.start { width: 813px; display: flex; align-items: center; padding-left: 20px; gap: 24px; color: #d8d8d8; letter-spacing: -.2px; }
.apps { display: flex; width: 435px; } .apps span { width: 62px; height: 50px; display: flex; align-items: center; justify-content: center; }
.apps .run { border-bottom: 3px solid #ffaaab; width: 52px; margin: 0 5px; padding-top: 3px; }
.apps .on { width: 61px; margin: 0; background: #343434; }
.tray { display: flex; margin-left: auto; align-items: center; letter-spacing: -.3px; }
.outer { margin-right: 10px; } .eng { width: 44px; }
.clock { width: 76px; display: flex; flex-direction: column; align-items: center; line-height: 23px; white-space: nowrap; letter-spacing: 0; }
.clock span:last-child { letter-spacing: .05px; }
.hq { font: bold 19px "Noto Sans", sans-serif; fill: #fff; } .k7 { font: bold 16px "Noto Sans", sans-serif; fill: #222; } .nb { font: 15px "Noto Sans", sans-serif; fill: #fff; }
```
